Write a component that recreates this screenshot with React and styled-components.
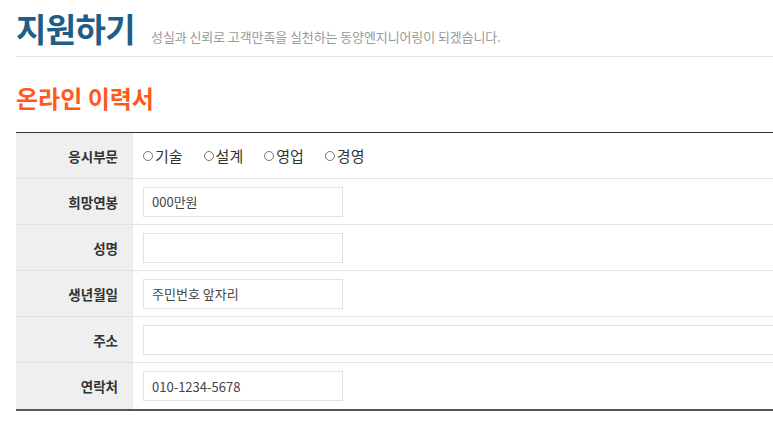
import React from "react";
import styled, { createGlobalStyle } from "styled-components";

const Global = createGlobalStyle`
  html, body { margin: 0; padding: 0; overflow: hidden; background: #fff; }
  body { font-family: "Noto Sans CJK KR", "Noto Sans", sans-serif; color: #333; }
  * { box-sizing: border-box; }
`;

const Page = styled.div`
  width: 1000px;
  margin-left: 16px;
`;

const Header = styled.div`
  display: flex;
  align-items: baseline;
  gap: 16px;
  padding-top: 12px;
  padding-bottom: 10px;
  border-bottom: 1px solid #e3e3e3;
`;

const Title = styled.h1`
  margin: 0;
  font-size: 33px;
  line-height: 33px;
  font-weight: 700;
  letter-spacing: -0.6px;
  color: #1f5d87;
`;

const Sub = styled.span`
  font-size: 13px;
  letter-spacing: -0.1px;
  color: #999;
`;

const Section = styled.h2`
  margin: 28px 0 22px;
  font-size: 24px;
  line-height: 25px;
  font-weight: 700;
  color: #ff5a1e;
`;

const Form = styled.div`
  border-top: 1px solid #333;
  border-bottom: 2px solid #555;
`;

const Row = styled.div`
  display: grid;
  grid-template-columns: 117px 1fr;
  height: 46px;
  border-bottom: ${(p) => (p.last ? "none" : "1px solid #e3e3e3")};
`;

const Label = styled.div`
  background: #efefef;
  display: flex;
  align-items: center;
  justify-content: flex-end;
  padding-right: 15px;
  font-size: 13.5px;
  font-weight: 700;
  color: #333;
`;

const Cell = styled.div`
  display: flex;
  align-items: center;
  padding-left: 10px;
`;

const Input = styled.div`
  width: ${(p) => (p.full ? "100%" : "200px")};
  height: 30px;
  border: 1px solid #e2e2e2;
  display: flex;
  align-items: center;
  padding-left: 8px;
  font-size: 13px;
  color: #444;
`;

const Radios = styled.div`
  display: flex;
  gap: 21px;
`;

const Radio = styled.label`
  display: flex;
  align-items: center;
  font-size: 15px;
  color: #333;
`;

const Dot = styled.span`
  width: 10px;
  height: 10px;
  border: 1px solid #777;
  border-radius: 50%;
  margin-right: 2px;
`;

const rows = [
  { label: "희망연봉", value: "000만원" },
  { label: "성명", value: "" },
  { label: "생년월일", value: "주민번호 앞자리" },
  { label: "주소", value: "", full: true },
  { label: "연락처", value: "010-1234-5678" },
];

export default function App() {
  return (
    <Page>
      <Global />
      <Header>
        <Title>지원하기</Title>
        <Sub>성실과 신뢰로 고객만족을 실천하는 동양엔지니어링이 되겠습니다.</Sub>
      </Header>
      <Section>온라인 이력서</Section>
      <Form>
        <Row>
          <Label>응시부문</Label>
          <Cell>
            <Radios>
              {["기술", "설계", "영업", "경영"].map((t) => (
                <Radio key={t}>
                  <Dot />
                  {t}
                </Radio>
              ))}
            </Radios>
          </Cell>
        </Row>
        {rows.map((r, i) => (
          <Row key={r.label} last={i === rows.length - 1}>
            <Label>{r.label}</Label>
            <Cell>
              <Input full={r.full}>{r.value}</Input>
            </Cell>
          </Row>
        ))}
      </Form>
    </Page>
  );
}
